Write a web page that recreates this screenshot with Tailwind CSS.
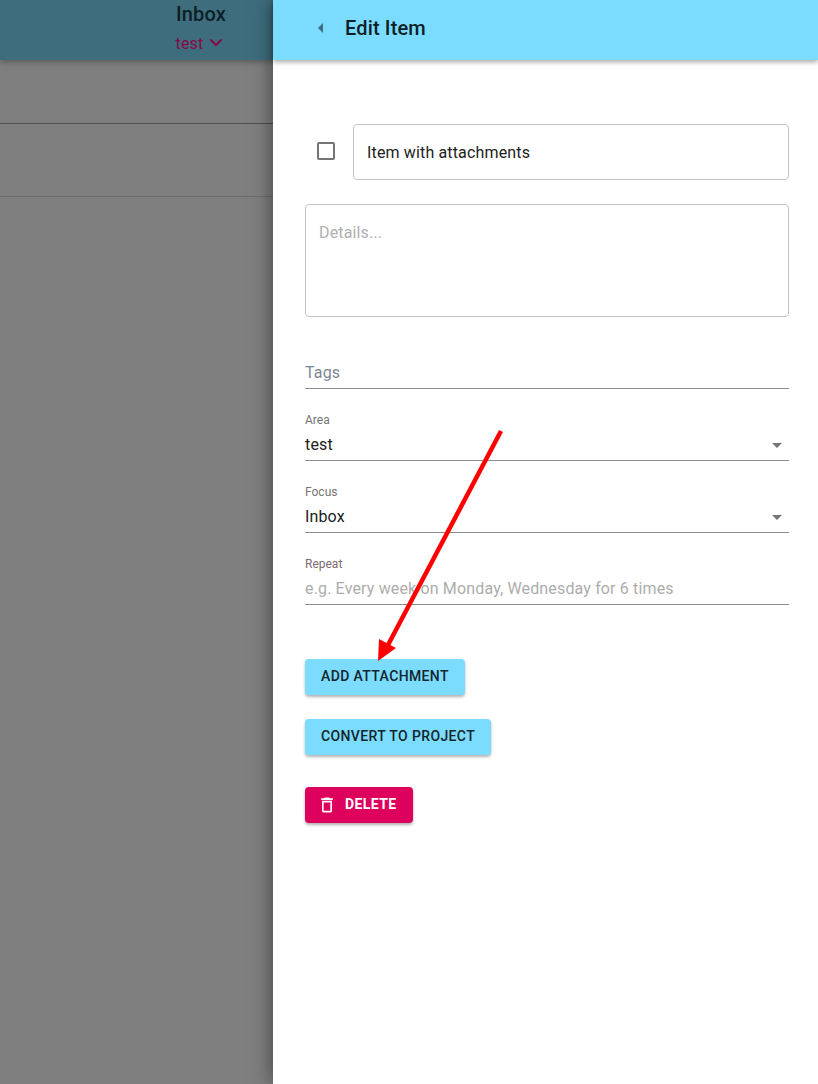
<!DOCTYPE html>
<html>
<head>
<meta charset="utf-8">
<script src="https://cdn.jsdelivr.net/npm/@tailwindcss/browser@4"></script>
</head>
<body class="font-['Roboto',sans-serif]">
<div class="relative flex w-[818px] h-[1084px] overflow-hidden bg-[#7f7f7f]">
  <div class="w-[273px] shrink-0 flex flex-col">
    <div class="h-[60px] bg-[#3e6e7e] shadow-[0_2px_6px_rgba(0,0,0,0.3)] relative flex flex-col items-center pl-[129px]">
      <div class="text-[20px] leading-[24px] mt-[2px] font-medium tracking-[0.15px] text-[#0c1e26]">Inbox</div>
      <div class="flex items-center gap-[6px] mt-[8px] -ml-[3px] text-[16px] leading-[20px] tracking-[0.15px] text-[#860a48]">
        <span>test</span>
        <svg width="14" height="9" viewBox="0 0 14 9" fill="none" class="-mt-[3px]"><path d="M1.5 1.5 L7 7 L12.5 1.5" stroke="#860a48" stroke-width="2"/></svg>
      </div>
    </div>
    <div class="h-[64px] border-b border-[#4f4f4f]"></div>
    <div class="h-[73px] border-b border-[#6b6b6b]"></div>
  </div>
  <div class="w-[545px] h-full bg-white shadow-[0_0_20px_rgba(0,0,0,0.5)] relative flex flex-col">
    <div class="h-[60px] shrink-0 bg-[#7bdcff] shadow-[0_2px_5px_rgba(0,0,0,0.35)] flex items-center pl-[36px] pb-[4px] gap-[12px]">
      <svg width="24" height="24" viewBox="0 0 24 24"><path d="M14 7l-5 5 5 5V7z" fill="#3f6f80"/></svg>
      <div class="text-[20px] font-medium tracking-[0.15px] text-[#0c1e26]">Edit Item</div>
    </div>
    <div class="pl-[32px] pr-[29px] flex flex-col">
      <div class="flex items-center mt-[64px]">
        <div class="w-[48px] flex justify-center pr-[6px] -mt-[2px]"><div class="w-[18px] h-[18px] border-2 border-[#757575] rounded-[2px]"></div></div>
        <div class="flex-1 h-[56px] border border-[#c4c4c4] rounded-[4px] flex items-center px-[13px] pt-[1px] text-[16px] tracking-[0.15px] text-[#212121]">Item with attachments</div>
      </div>
      <div class="mt-[24px] h-[113px] border border-[#c4c4c4] rounded-[4px] px-[13px] pt-[16px] text-[16px] leading-[24px] tracking-[0.15px] text-[#b0b0b0]">Details...</div>
      <div class="mt-[43px] h-[29px] pt-[1px] border-b border-[#8c8c8c] text-[16px] leading-[24px] tracking-[0.15px] text-[#7c8794]">Tags</div>
      <div class="mt-[24px] text-[12px] leading-[14px] text-[#757575]">Area</div>
      <div class="h-[34px] pt-[2px] border-b border-[#8c8c8c] flex items-center justify-between text-[16px] tracking-[0.15px] text-[#212121]">
        <span>test</span>
        <svg width="24" height="24" viewBox="0 0 24 24"><path d="M7 10l5 5 5-5z" fill="#757575"/></svg>
      </div>
      <div class="mt-[24px] text-[12px] leading-[14px] text-[#757575]">Focus</div>
      <div class="h-[34px] pt-[2px] border-b border-[#8c8c8c] flex items-center justify-between text-[16px] tracking-[0.15px] text-[#212121]">
        <span>Inbox</span>
        <svg width="24" height="24" viewBox="0 0 24 24"><path d="M7 10l5 5 5-5z" fill="#757575"/></svg>
      </div>
      <div class="mt-[24px] text-[12px] leading-[14px] text-[#7d6a72]">Repeat</div>
      <div class="h-[34px] pt-[2px] border-b border-[#8c8c8c] flex items-center text-[16px] tracking-[0.15px] text-[#adadad]">e.g. Every week on Monday, Wednesday for 6 times</div>
      <div class="mt-[54px] self-start h-[36px] px-[16px] pb-[1px] rounded-[4px] bg-[#7bdcff] shadow-[0_2px_3px_rgba(0,0,0,0.3)] flex items-center text-[14px] font-medium tracking-[0.37px] text-[#13242c]">ADD ATTACHMENT</div>
      <div class="mt-[24px] self-start h-[36px] px-[16px] pb-[1px] rounded-[4px] bg-[#7bdcff] shadow-[0_2px_3px_rgba(0,0,0,0.3)] flex items-center text-[14px] font-medium tracking-[0.37px] text-[#13242c]">CONVERT TO PROJECT</div>
      <div class="mt-[32px] self-start h-[36px] pl-[12px] pr-[16px] pb-[1px] gap-[8px] rounded-[4px] bg-[#dd005c] shadow-[0_2px_3px_rgba(0,0,0,0.3)] flex items-center text-[14px] font-bold tracking-[0.4px] text-white">
        <svg width="20" height="20" viewBox="0 0 24 24"><path d="M16 9v10H8V9h8m-1.5-6h-5l-1 1H5v2h14V4h-3.5l-1-1zM18 7H6v12c0 1.1.9 2 2 2h8c1.1 0 2-.9 2-2V7z" fill="#fff"/></svg>
        <span>DELETE</span>
      </div>
    </div>
  </div>
  <svg class="absolute left-0 top-0 pointer-events-none" width="818" height="1084" viewBox="0 0 818 1084">
    <path d="M501 431 L388 645" stroke="#ff0000" stroke-width="4.5" fill="none"/>
    <path d="M378 661 L379 639 L396 648 Z" fill="#ff0000"/>
  </svg>
</div>
</body>
</html>
